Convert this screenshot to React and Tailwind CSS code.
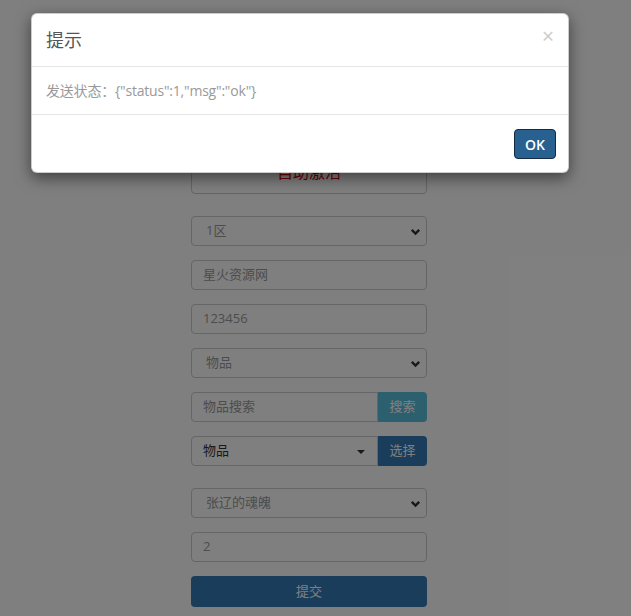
import React from "react";

const font = { fontFamily: '"Open Sans", "Noto Sans CJK SC", sans-serif' };

function Chevron() {
  return (
    <svg width="11" height="8" viewBox="0 0 11 8" className="absolute right-[5px] top-[11px]">
      <path d="M1.8 1.8 L5.5 5.5 L9.2 1.8" fill="none" stroke="#333" strokeWidth="2.4" />
    </svg>
  );
}

function Select({ text }) {
  return (
    <div className="relative h-[30px] w-full rounded border border-[#ccc] bg-white text-[13px] text-[#999] flex items-center pl-[14px]">
      {text}
      <Chevron />
    </div>
  );
}

function Input({ text }) {
  return (
    <div className="h-[30px] w-full rounded border border-[#ccc] bg-white text-[13px] text-[#999] flex items-center pl-[11px]">
      {text}
    </div>
  );
}

export default function App() {
  return (
    <div style={font} className="relative w-[631px] h-[616px] overflow-hidden bg-white">
      <div className="pt-[150px] ml-[191px] w-[236px] flex flex-col">
        <div className="h-[44px] rounded border border-[#ccc] flex items-center justify-center text-[16px] text-[#e00000]">
          自助激活
        </div>
        <div className="mt-[22px] flex flex-col gap-[14px]">
          <Select text="1区" />
          <Input text="星火资源网" />
          <Input text="123456" />
          <Select text="物品" />
          <div className="flex h-[30px]">
            <div className="flex-1 rounded-l border border-[#ccc] text-[13px] text-[#999] flex items-center pl-[11px]">物品搜索</div>
            <div className="w-[49px] rounded-r bg-[#5bc0de] text-white text-[13px] flex items-center justify-center">搜索</div>
          </div>
          <div className="flex h-[30px]">
            <div className="relative flex-1 rounded-l border border-[#ccc] text-[13px] text-[#333] flex items-center pl-[11px]">
              物品
              <div className="absolute right-[12px] top-[13px] w-0 h-0 border-l-[4px] border-r-[4px] border-t-[4px] border-l-transparent border-r-transparent border-t-[#333]" />
            </div>
            <div className="w-[49px] rounded-r bg-[#337ab7] text-white text-[13px] flex items-center justify-center">选择</div>
          </div>
        </div>
        <div className="mt-[22px] flex flex-col gap-[14px]">
          <Select text="张辽的魂魄" />
          <Input text="2" />
          <div className="h-[31px] rounded bg-[#337ab7] text-white text-[13px] flex items-center justify-center">提交</div>
        </div>
      </div>

      <div className="absolute inset-0 bg-black/50" />

      <div className="absolute left-[31px] top-[13px] w-[538px] rounded-[6px] border border-black/20 bg-white shadow-[0_5px_15px_rgba(0,0,0,0.5)]">
        <div className="relative h-[53px] border-b border-[#e5e5e5] flex items-center pl-[14px]">
          <span className="text-[18px] text-[#555] leading-none">提示</span>
          <span className="absolute right-[14px] top-[12px] text-[21px] leading-none text-[#ccc]">×</span>
        </div>
        <div className="h-[48px] border-b border-[#e5e5e5] flex items-center pl-[14px] text-[14px] text-[#999] tracking-[-0.2px]">
          发送状态：{'{"status":1,"msg":"ok"}'}
        </div>
        <div className="h-[57px] flex items-start justify-end pr-[12px] pt-[14px]">
          <div className="w-[42px] h-[30px] rounded-[4px] border border-[#122b40] bg-[#286090] text-white text-[14px] font-semibold flex items-center justify-center">
            OK
          </div>
        </div>
      </div>
    </div>
  );
}
